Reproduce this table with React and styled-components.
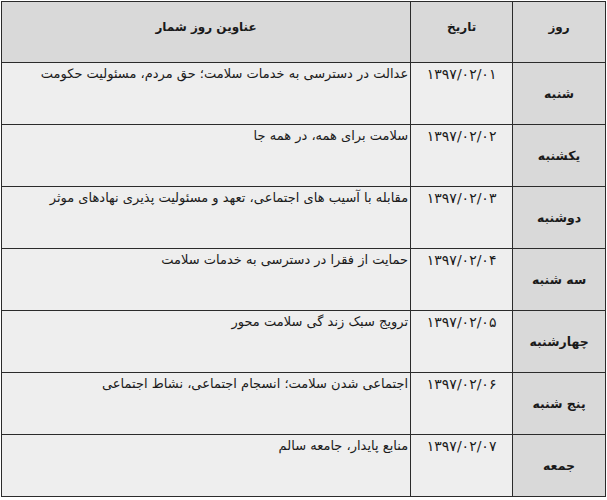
import React from 'react';
import styled, { createGlobalStyle } from 'styled-components';

const GlobalStyle = createGlobalStyle`
  body {
    margin: 0;
    background: #ffffff;
    font-family: "DejaVu Sans", sans-serif;
  }
`;

const Wrap = styled.div`
  padding: 1px 2px 0 1px;
`;

const Table = styled.table`
  width: 605px;
  border-collapse: collapse;
  direction: rtl;
  font-family: "DejaVu Sans", sans-serif;
  font-size: 13px;
  color: #1a1a1a;
`;

const HeadCell = styled.th`
  height: 61px;
  width: ${p => p.w}px;
  background: #d9d9d9;
  border: 1px solid #2b2b2b;
  font-weight: bold;
  font-size: 12px;
  text-align: center;
  vertical-align: top;
  padding: 18px 4px 0;
  box-sizing: border-box;
`;

const Row = styled.tr`
  height: 62px;
`;

const DayCell = styled.td`
  background: #d9d9d9;
  border: 1px solid #2b2b2b;
  text-align: center;
  vertical-align: middle;
  font-weight: bold;
  font-size: 12.5px;
  padding: 0 2px;
`;

const DateCell = styled.td`
  background: #eeeeee;
  border: 1px solid #2b2b2b;
  text-align: center;
  vertical-align: top;
  padding: 3px 4px 0;
  font-size: 14px;
`;

const TitleCell = styled.td`
  background: #eeeeee;
  border: 1px solid #2b2b2b;
  text-align: right;
  vertical-align: top;
  padding: 3px 2px 0 4px;
`;

const rows = [
  ['شنبه', '۱۳۹۷/۰۲/۰۱', 'عدالت در دسترسی به خدمات سلامت؛ حق مردم، مسئولیت حکومت'],
  ['یکشنبه', '۱۳۹۷/۰۲/۰۲', 'سلامت برای همه، در همه جا'],
  ['دوشنبه', '۱۳۹۷/۰۲/۰۳', 'مقابله با آسیب های اجتماعی، تعهد و مسئولیت پذیری نهادهای موثر'],
  ['سه شنبه', '۱۳۹۷/۰۲/۰۴', 'حمایت از فقرا در دسترسی به خدمات سلامت'],
  ['چهارشنبه', '۱۳۹۷/۰۲/۰۵', 'ترویج سبک زند گی سلامت محور'],
  ['پنج شنبه', '۱۳۹۷/۰۲/۰۶', 'اجتماعی شدن سلامت؛ انسجام اجتماعی، نشاط اجتماعی'],
  ['جمعه', '۱۳۹۷/۰۲/۰۷', 'منابع پایدار، جامعه سالم'],
];

export default function App() {
  return (
    <Wrap>
      <GlobalStyle />
      <Table>
        <thead>
          <tr>
            <HeadCell w={93}>روز</HeadCell>
            <HeadCell w={102}>تاریخ</HeadCell>
            <HeadCell w={410}>عناوین روز شمار</HeadCell>
          </tr>
        </thead>
        <tbody>
          {rows.map(r => (
            <Row key={r[1]}>
              <DayCell>{r[0]}</DayCell>
              <DateCell>{r[1]}</DateCell>
              <TitleCell>{r[2]}</TitleCell>
            </Row>
          ))}
        </tbody>
      </Table>
    </Wrap>
  );
}
